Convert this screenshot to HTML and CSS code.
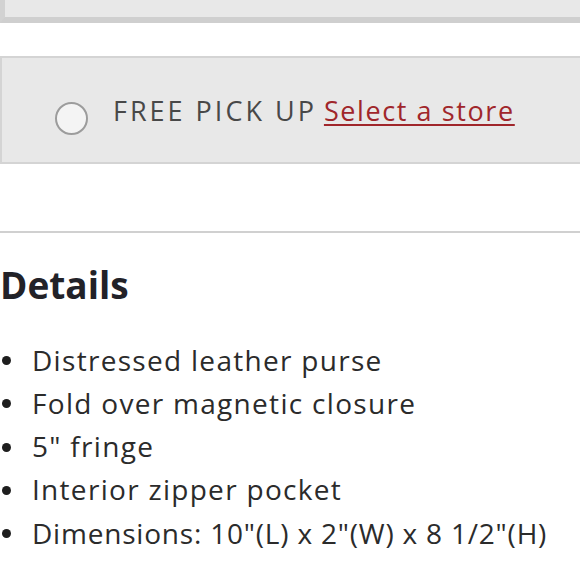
FILE: index.html
```html
<!DOCTYPE html>
<html lang="en">
<head>
<meta charset="utf-8">
<title>Product details</title>
<link rel="stylesheet" href="styles.css">
</head>
<body>
<div class="option option-top"></div>
<div class="option option-pickup">
  <span class="radio"></span>
  <span class="label"><span class="label-text">FREE PICK UP</span> <a class="store-link" href="#">Select a store</a></span>
</div>
<hr class="divider">
<section class="details">
  <h2 class="details-title">Details</h2>
  <ul class="details-list">
    <li>Distressed leather purse</li>
    <li>Fold over magnetic closure</li>
    <li>5" fringe</li>
    <li>Interior zipper pocket</li>
    <li class="tight">Dimensions: 10"(L) x 2"(W) x 8 1/2"(H)</li>
  </ul>
</section>
</body>
</html>
```

FILE: styles.css
```css
html, body {
  margin: 0;
  padding: 0;
  background: #ffffff;
  overflow: hidden;
}
body {
  width: 580px;
  height: 580px;
  font-family: "Open Sans", "Liberation Sans", sans-serif;
  color: #2b2b2b;
}
.option {
  width: 100%;
  background: #e8e8e8;
  box-sizing: border-box;
}
.option-top {
  height: 23px;
  border-left: 5px solid #d2d2d2;
  border-bottom: 6px solid #cfcfcf;
}
.option-pickup {
  margin-top: 33px;
  height: 108px;
  border: 2px solid #d4d4d4;
  border-right: 0;
  display: flex;
  align-items: flex-start;
  padding-left: 53px;
}
.radio {
  width: 33px;
  height: 33px;
  box-sizing: border-box;
  border: 2px solid #9c9c9c;
  border-radius: 50%;
  background: #f4f4f4;
  margin-top: 43.5px;
  flex: none;
}
.label {
  margin-left: 25px;
  margin-top: 34.5px;
  font-size: 27px;
  line-height: 36px;
  color: #484848;
  white-space: nowrap;
}
.label-text {
  letter-spacing: 3px;
}
.store-link {
  color: #a0262b;
  letter-spacing: 1.6px;
  text-decoration: underline;
  text-decoration-thickness: 2px;
  text-underline-offset: 3px;
}
.divider {
  margin: 67px 0 0 0;
  border: 0;
  height: 2px;
  background: #d0d0d0;
}
.details-title {
  margin: 29.5px 0 0 0;
  font-size: 37px;
  line-height: 44.4px;
  font-weight: 700;
  color: #222228;
}
.details-list {
  list-style: none;
  margin: 31.6px 0 0 0;
  padding: 0;
}
.details-list li {
  font-size: 28px;
  line-height: 43.3px;
  letter-spacing: 1.3px;
  white-space: nowrap;
}
.details-list li.tight {
  letter-spacing: 0.8px;
}
.details-list li::before {
  content: "";
  display: inline-block;
  width: 9px;
  height: 9px;
  border-radius: 50%;
  background: #1e1e1e;
  margin: 0 21px 5.5px 2px;
}
```
